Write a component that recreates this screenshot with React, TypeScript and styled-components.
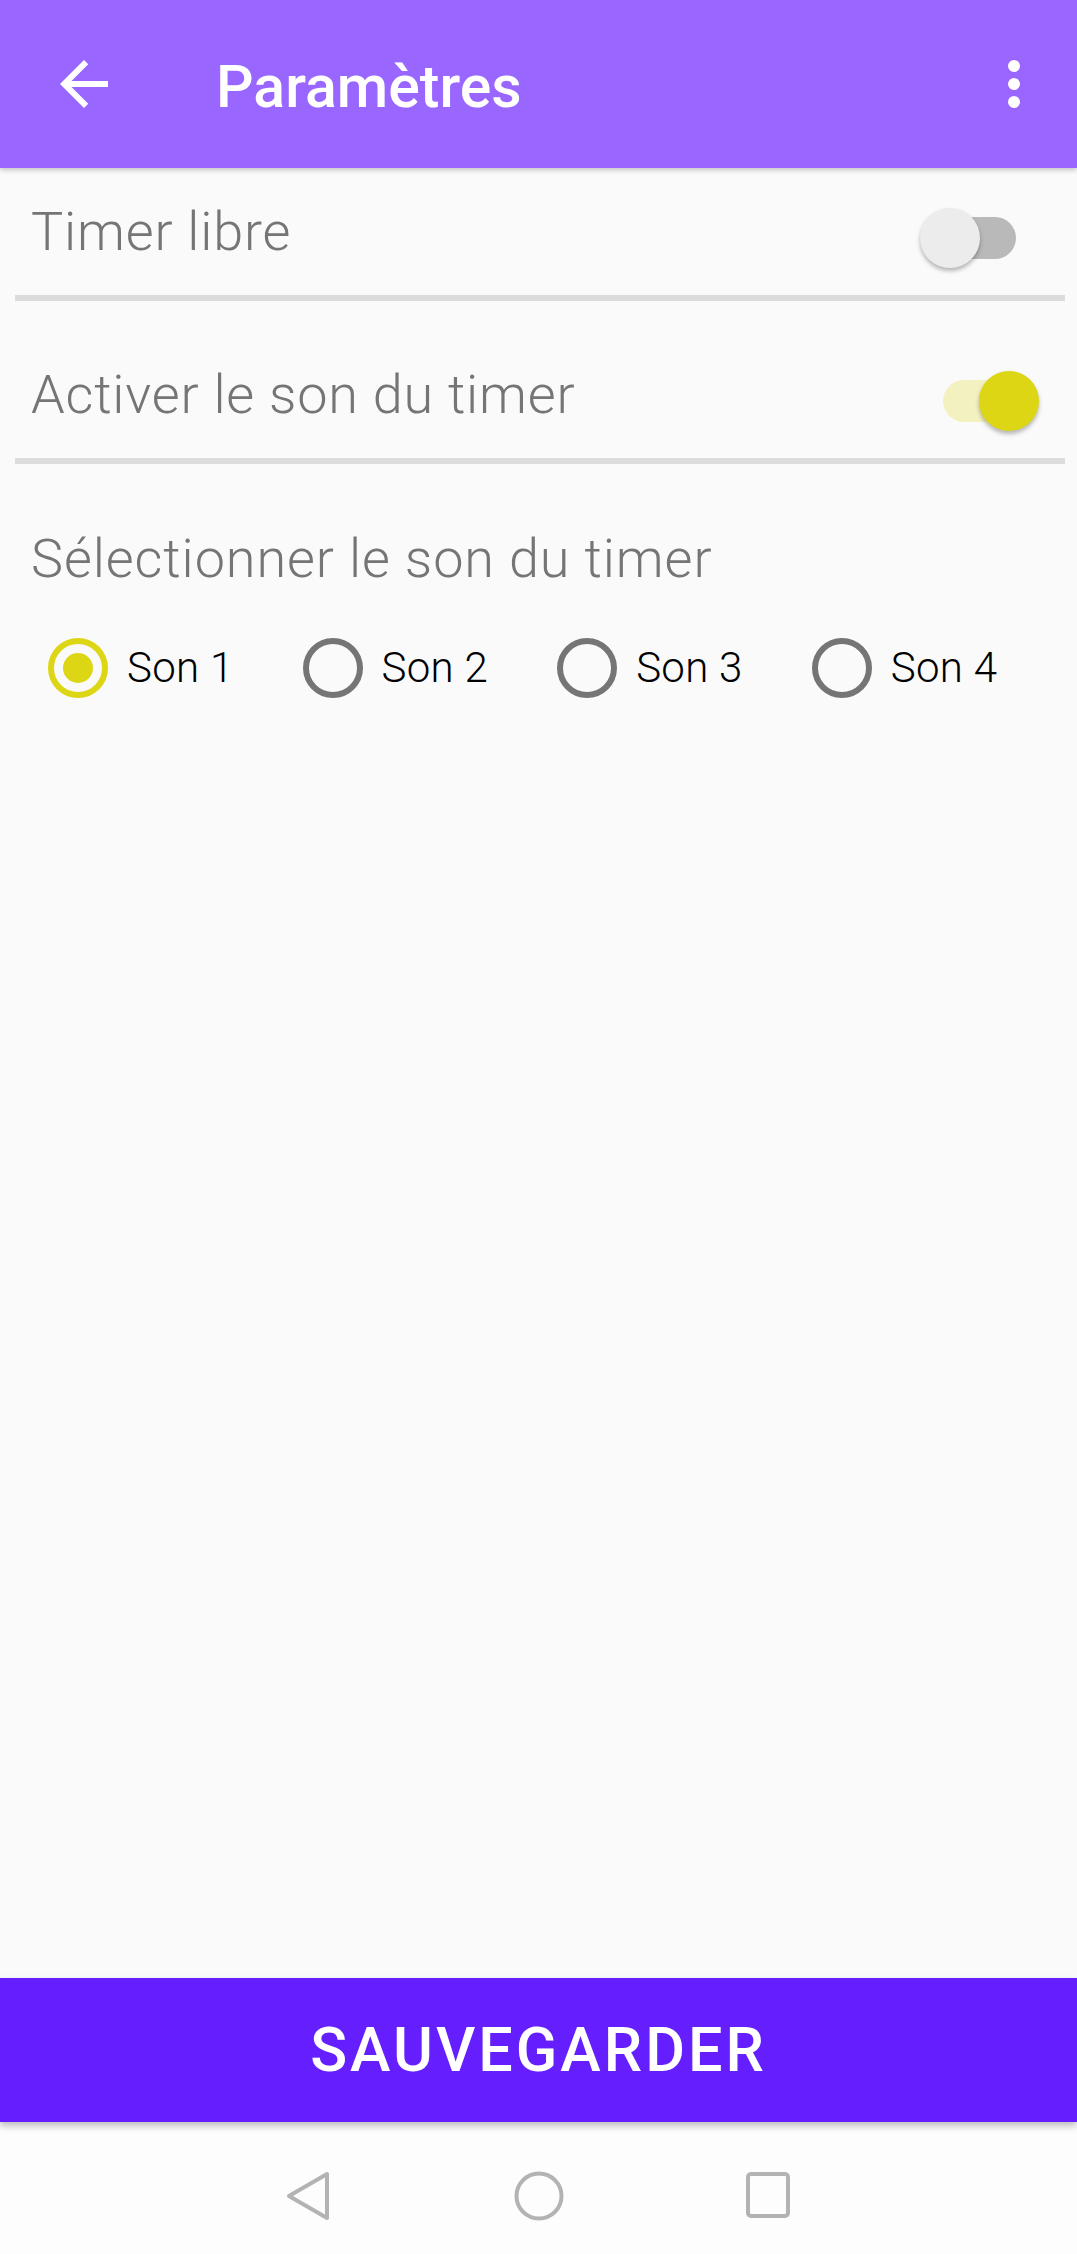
import React, { useState } from 'react';
import styled, { createGlobalStyle } from 'styled-components';

const GlobalStyle = createGlobalStyle`
  html, body {
    margin: 0;
    padding: 0;
    background: #fafafa;
  }
  * {
    box-sizing: border-box;
  }
`;

const Screen = styled.div`
  width: 1077px;
  height: 2254px;
  display: flex;
  flex-direction: column;
  background: #fafafa;
  font-family: Roboto, 'Noto Sans', sans-serif;
  overflow: hidden;
`;

const AppBar = styled.header`
  position: relative;
  z-index: 2;
  height: 168px;
  flex-shrink: 0;
  display: flex;
  align-items: center;
  background: #9966ff;
  box-shadow: 0 2px 5px rgba(0, 0, 0, 0.22);
`;

const IconButton = styled.button<{ $side: 'left' | 'right' }>`
  width: 72px;
  height: 72px;
  padding: 0;
  border: none;
  background: transparent;
  display: flex;
  align-items: center;
  justify-content: center;
  margin: ${props => (props.$side === 'left' ? '0 0 0 48px' : '0 27px 0 auto')};
  cursor: pointer;
`;

const Title = styled.h1`
  margin: 6px 0 0 96px;
  color: #ffffff;
  font-size: 59px;
  font-weight: 500;
  line-height: 72px;
`;

const SettingRow = styled.div<{ $padTop?: number }>`
  display: flex;
  align-items: center;
  justify-content: space-between;
  height: ${props => 127 + (props.$padTop || 0) + 6}px;
  padding: ${props => props.$padTop || 0}px 0 0 16px;
  margin: 0 12px 0 15px;
  border-bottom: 6px solid #dcdcdc;
  flex-shrink: 0;
`;

const RowLabel = styled.span`
  color: #757575;
  font-size: 54px;
  font-weight: 300;
  letter-spacing: 0.8px;
  line-height: 64px;
`;

const SwitchBox = styled.button<{ $inset: number }>`
  position: relative;
  width: 104px;
  height: 60px;
  margin: 13px ${props => props.$inset}px 0 0;
  padding: 0;
  border: none;
  background: transparent;
  cursor: pointer;
`;

const Track = styled.span<{ $on: boolean }>`
  position: absolute;
  left: 8px;
  top: 9px;
  width: 88px;
  height: 42px;
  border-radius: 21px;
  background: ${props => (props.$on ? '#f3f1c0' : '#b9b9b9')};
`;

const Thumb = styled.span<{ $on: boolean }>`
  position: absolute;
  top: 0;
  left: ${props => (props.$on ? '44px' : '0')};
  width: 60px;
  height: 60px;
  border-radius: 50%;
  background: ${props => (props.$on ? '#ddd615' : '#ececec')};
  box-shadow: 0 3px 4px rgba(0, 0, 0, 0.28);
`;

const SectionTitle = styled.h2`
  margin: 63px 0 0 31px;
  color: #757575;
  font-size: 54px;
  font-weight: 300;
  letter-spacing: 0.9px;
  line-height: 64px;
`;

const RadioGroup = styled.div`
  display: flex;
  align-items: center;
  gap: 69px;
  margin: 47px 0 0 48px;
`;

const RadioItem = styled.label`
  display: flex;
  align-items: center;
  gap: 19px;
  cursor: pointer;
`;

const RadioCircle = styled.span<{ $checked: boolean }>`
  width: 60px;
  height: 60px;
  border-radius: 50%;
  border: 6px solid ${props => (props.$checked ? '#ddd615' : '#757575')};
  display: flex;
  align-items: center;
  justify-content: center;

  &::after {
    content: '';
    width: 30px;
    height: 30px;
    border-radius: 50%;
    background: ${props => (props.$checked ? '#ddd615' : 'transparent')};
  }
`;

const RadioLabel = styled.span`
  color: #000000;
  font-size: 42px;
  font-weight: 300;
  letter-spacing: 0.3px;
  line-height: 60px;
`;

const Filler = styled.div`
  flex: 1;
`;

const SaveButton = styled.button`
  position: relative;
  z-index: 2;
  height: 144px;
  flex-shrink: 0;
  border: none;
  background: #651fff;
  color: #ffffff;
  font-family: Roboto, 'Noto Sans', sans-serif;
  font-size: 61px;
  font-weight: 500;
  letter-spacing: 3px;
  box-shadow: 0 4px 7px rgba(0, 0, 0, 0.25);
  cursor: pointer;
`;

const NavBar = styled.nav`
  height: 132px;
  flex-shrink: 0;
  display: flex;
  align-items: center;
  justify-content: center;
  gap: 182px;
  padding-top: 16px;
  background: #fdfdfd;
`;

const NavIcon = styled.svg`
  width: 50px;
  height: 50px;
  fill: none;
  stroke: #b3b3b3;
  stroke-width: 4;
  stroke-linejoin: round;
`;

const sounds = ['Son 1', 'Son 2', 'Son 3', 'Son 4'];

export default function App() {
  const [freeTimer, setFreeTimer] = useState(false);
  const [soundOn, setSoundOn] = useState(true);
  const [sound, setSound] = useState(0);

  return (
    <>
      <GlobalStyle />
      <Screen>
        <AppBar>
          <IconButton $side="left" aria-label="Retour">
            <svg width="72" height="72" viewBox="0 0 24 24" fill="#ffffff">
              <path d="M20 11H7.83l5.59-5.59L12 4l-8 8 8 8 1.41-1.41L7.83 13H20v-2z" />
            </svg>
          </IconButton>
          <Title>Paramètres</Title>
          <IconButton $side="right" aria-label="Plus d'options">
            <svg width="72" height="72" viewBox="0 0 24 24" fill="#ffffff">
              <circle cx="12" cy="6" r="2" />
              <circle cx="12" cy="12" r="2" />
              <circle cx="12" cy="18" r="2" />
            </svg>
          </IconButton>
        </AppBar>

        <SettingRow>
          <RowLabel>Timer libre</RowLabel>
          <SwitchBox $inset={41} onClick={() => setFreeTimer(!freeTimer)}>
            <Track $on={freeTimer} />
            <Thumb $on={freeTimer} />
          </SwitchBox>
        </SettingRow>

        <SettingRow $padTop={30}>
          <RowLabel>Activer le son du timer</RowLabel>
          <SwitchBox $inset={26} onClick={() => setSoundOn(!soundOn)}>
            <Track $on={soundOn} />
            <Thumb $on={soundOn} />
          </SwitchBox>
        </SettingRow>

        <SectionTitle>Sélectionner le son du timer</SectionTitle>
        <RadioGroup>
          {sounds.map((name, i) => (
            <RadioItem key={name} onClick={() => setSound(i)}>
              <RadioCircle $checked={sound === i} />
              <RadioLabel>{name}</RadioLabel>
            </RadioItem>
          ))}
        </RadioGroup>

        <Filler />

        <SaveButton>SAUVEGARDER</SaveButton>

        <NavBar>
          <NavIcon viewBox="0 0 50 50">
            <polygon points="45,3 45,47 7,25" />
          </NavIcon>
          <NavIcon viewBox="0 0 50 50">
            <circle cx="25" cy="25" r="22.5" />
          </NavIcon>
          <NavIcon viewBox="0 0 50 50">
            <rect x="2" y="3" width="40" height="42" rx="3" />
          </NavIcon>
        </NavBar>
      </Screen>
    </>
  );
}
